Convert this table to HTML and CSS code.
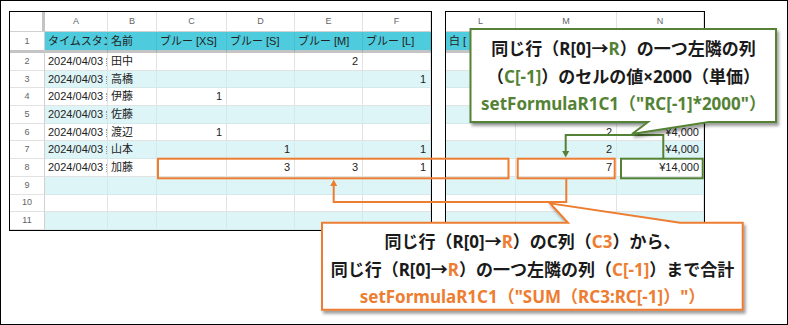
FILE: index.html
```
<!DOCTYPE html>
<html lang="ja">
<head>
<meta charset="utf-8">
<link rel="stylesheet" href="styles.css">
</head>
<body>
<div class="frame">
  <div class="sheets">
    <div class="sheet sheet-left">
      <div class="c corner"></div><div class="c colh">A</div><div class="c colh">B</div><div class="c colh">C</div><div class="c colh">D</div><div class="c colh">E</div><div class="c colh">F</div>

      <div class="c rown r1">1</div><div class="c hd clip">タイムスタンプ</div><div class="c hd">名前</div><div class="c hd">ブルー [XS]</div><div class="c hd">ブルー [S]</div><div class="c hd">ブルー [M]</div><div class="c hd">ブルー [L]</div>

      <div class="c rown">2</div><div class="c date">2024/04/03</div><div class="c">田中</div><div class="c"></div><div class="c"></div><div class="c n">2</div><div class="c"></div>
      <div class="c rown">3</div><div class="c date alt">2024/04/03</div><div class="c alt">高橋</div><div class="c alt"></div><div class="c alt"></div><div class="c alt"></div><div class="c alt n">1</div>
      <div class="c rown">4</div><div class="c date">2024/04/03</div><div class="c">伊藤</div><div class="c n">1</div><div class="c"></div><div class="c"></div><div class="c"></div>
      <div class="c rown">5</div><div class="c date alt">2024/04/03</div><div class="c alt">佐藤</div><div class="c alt"></div><div class="c alt"></div><div class="c alt"></div><div class="c alt"></div>
      <div class="c rown">6</div><div class="c date">2024/04/03</div><div class="c">渡辺</div><div class="c n">1</div><div class="c"></div><div class="c"></div><div class="c"></div>
      <div class="c rown">7</div><div class="c date alt">2024/04/03</div><div class="c alt">山本</div><div class="c alt"></div><div class="c alt n">1</div><div class="c alt"></div><div class="c alt n">1</div>
      <div class="c rown">8</div><div class="c date">2024/04/03</div><div class="c">加藤</div><div class="c"></div><div class="c n">3</div><div class="c n">3</div><div class="c n">1</div>
      <div class="c rown">9</div><div class="c alt"></div><div class="c alt"></div><div class="c alt"></div><div class="c alt"></div><div class="c alt"></div><div class="c alt"></div>
      <div class="c rown">10</div><div class="c"></div><div class="c"></div><div class="c"></div><div class="c"></div><div class="c"></div><div class="c"></div>
      <div class="c rown">11</div><div class="c alt"></div><div class="c alt"></div><div class="c alt"></div><div class="c alt"></div><div class="c alt"></div><div class="c alt"></div>
    </div>

    <div class="sheet sheet-right">
      <div class="c colh">L</div><div class="c colh">M</div><div class="c colh">N</div>
      <div class="c hd clip">白 [</div><div class="c hd"></div><div class="c hd"></div>
      <div class="c"></div><div class="c"></div><div class="c"></div>
      <div class="c alt"></div><div class="c alt"></div><div class="c alt"></div>
      <div class="c"></div><div class="c"></div><div class="c"></div>
      <div class="c alt"></div><div class="c alt"></div><div class="c alt"></div>
      <div class="c"></div><div class="c n">2</div><div class="c n">¥4,000</div>
      <div class="c alt"></div><div class="c alt n">2</div><div class="c alt n">¥4,000</div>
      <div class="c"></div><div class="c n">7</div><div class="c n">¥14,000</div>
      <div class="c alt"></div><div class="c alt"></div><div class="c alt"></div>
      <div class="c"></div><div class="c"></div><div class="c"></div>
      <div class="c alt"></div><div class="c alt"></div><div class="c alt"></div>
    </div>
  </div>

  <svg class="overlay" width="788" height="325" viewBox="0 0 788 325" xmlns="http://www.w3.org/2000/svg">
    <defs>
      <filter id="sh" x="-5%" y="-10%" width="115%" height="130%">
        <feDropShadow dx="2" dy="3" stdDeviation="1.8" flood-color="#000" flood-opacity="0.38"/>
      </filter>
    </defs>
    <g fill="none" stroke="#ed7d31" stroke-width="2">
      <rect x="158" y="158.7" width="350.5" height="19.6"/>
      <rect x="517.7" y="158.7" width="97" height="19.6"/>
      <path d="M566.3 179 V202 H333.7 V184"/>
    </g>
    <polygon points="333.7,179.5 330.2,186 337.2,186" fill="#ed7d31"/>
    <g fill="none" stroke="#548235" stroke-width="2">
      <rect x="621" y="158.7" width="81.7" height="19.6"/>
      <path d="M663.3 158 V135 H565.7 V151"/>
    </g>
    <polygon points="565.7,157.5 562.2,151 569.2,151" fill="#548235"/>
    <path d="M470.5 29 H776 V122 H709 L632 134 L648 122 H470.5 Z" fill="#fff" stroke="#548235" stroke-width="2" stroke-linejoin="miter" filter="url(#sh)"/>
    <path d="M322 222.7 H568 L550 203.3 L680 222.7 H742.7 V309.7 H322 Z" fill="#fff" stroke="#ed7d31" stroke-width="2" stroke-linejoin="miter" filter="url(#sh)"/>
  </svg>

  <div class="callout callout-green">
    <div class="ln">同じ行（R[0]→<span class="g">R</span>）の一つ左隣の列</div>
    <div class="ln">（<span class="g">C[-1]</span>）のセルの値×2000（単価）</div>
    <div class="ln g">setFormulaR1C1（"RC[-1]*2000"）</div>
  </div>

  <div class="callout callout-orange">
    <div class="ln">同じ行（R[0]→<span class="o">R</span>）のC列（<span class="o">C3</span>）から、</div>
    <div class="ln">同じ行（R[0]→<span class="o">R</span>）の一つ左隣の列（<span class="o">C[-1]</span>）まで合計</div>
    <div class="ln o">setFormulaR1C1（"SUM（RC3:RC[-1]）"）</div>
  </div>
</div>
</body>
</html>
```

FILE: styles.css
```
* { box-sizing: border-box; }
html, body { margin: 0; padding: 0; background: #fff; }

.frame {
  position: relative;
  width: 788px;
  height: 325px;
  background: #fff;
  box-shadow: inset 0 0 0 1px #000;
  overflow: hidden;
}

.sheets {
  display: flex;
  align-items: flex-start;
  gap: 13px;
  padding: 11px 0 0 9px;
}

.sheet {
  display: grid;
  border: 1px solid #000;
  background: #fff;
  font-family: "Liberation Sans", "Noto Sans CJK JP", sans-serif;
  font-size: 11px;
  color: #222;
  grid-template-rows: 20px 21px repeat(10, 17.7px);
}

.sheet-left { grid-template-columns: 35px 63px 49px 70px 68px 68px 68px; }
.sheet-right { grid-template-columns: 70px 101px 87px; }

.c {
  position: relative;
  border-right: 1px solid #e2e2e2;
  border-bottom: 1px solid #e2e2e2;
  display: flex;
  align-items: center;
  padding: 0 3px;
  white-space: nowrap;
  overflow: hidden;
  line-height: 1;
}

.clip { overflow: hidden; }

/* sliver of the clipped time part that follows the date */
.date::after {
  content: "";
  position: absolute;
  right: 0;
  top: 5px;
  width: 1px;
  height: 8px;
  border-right: 1px dotted #9a9a9a;
}

.colh {
  justify-content: center;
  font-size: 9px;
  color: #5f6368;
  border-bottom-color: #d0d0d0;
}

.corner {
  border-right: 3px solid #c4c4c4;
  border-bottom-color: #d0d0d0;
}

.rown {
  justify-content: center;
  font-size: 9px;
  color: #5f6368;
  background: #fff;
  border-right-color: #d0d0d0;
}

.r1 { border-bottom: 3px solid #c4c4c4; }

.hd {
  background: #4ecbdc;
  border-right-color: #47bfcf;
  border-bottom: 3px solid #c4c4c4;
  color: #222;
}

.alt {
  background: #def5f8;
  border-right-color: #d3e9ec;
  border-bottom-color: #d3e9ec;
}

.n { justify-content: flex-end; padding-right: 4px; }

.overlay {
  position: absolute;
  left: 0;
  top: 0;
}

.callout {
  position: absolute;
  display: flex;
  flex-direction: column;
  align-items: center;
  justify-content: center;
  font-family: "Noto Sans", "Noto Sans CJK JP", sans-serif;
  font-weight: 700;
  font-size: 17px;
  line-height: 27.5px;
  color: #1a1a1a;
  white-space: nowrap;
}

.callout-green { left: 471px; top: 30px; width: 305px; height: 92px; padding-top: 1px; }
.callout-orange { left: 323px; top: 224px; width: 419px; height: 86px; padding-top: 5px; }

.g { color: #548235; }
.o { color: #ed7d31; }
```
